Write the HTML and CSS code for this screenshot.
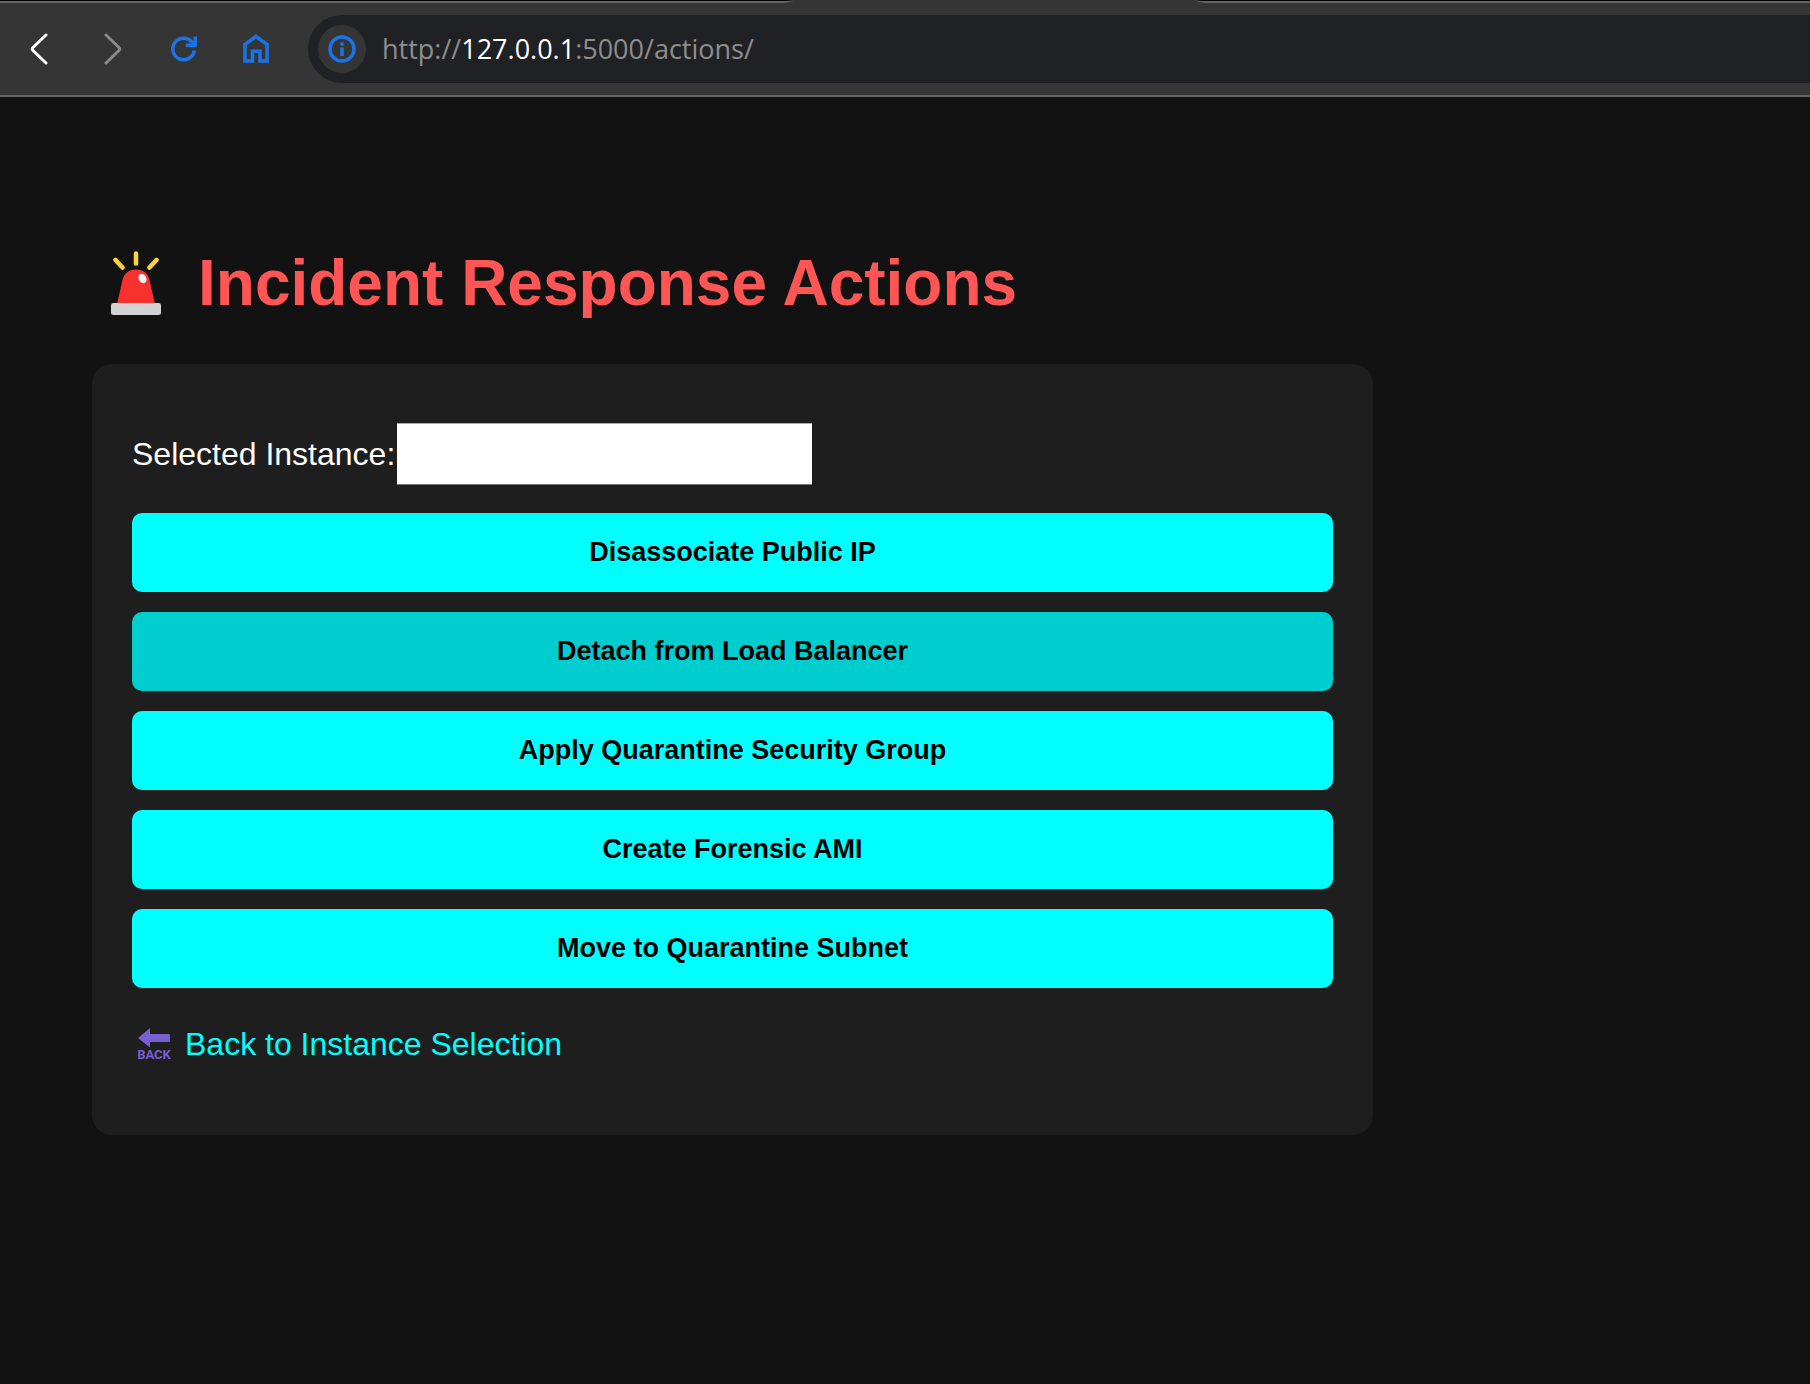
FILE: index.html
```html
<!DOCTYPE html>
<html lang="en">
<head>
<meta charset="utf-8">
<title>Incident Response Actions</title>
<link rel="stylesheet" href="styles.css">
</head>
<body>
<header class="browser">
  <div class="tab-strip">
    <div class="tab-edge tab-edge-left"></div>
    <div class="tab-active"></div>
    <div class="tab-edge tab-edge-right"></div>
  </div>
  <div class="toolbar">
    <nav class="nav-buttons" aria-label="Browser navigation">
      <button class="icon-button" type="button" aria-label="Back">
        <svg width="32" height="32" viewBox="0 0 32 32" fill="none" stroke="#fff" stroke-width="3" stroke-linecap="round" stroke-linejoin="round"><path d="M22 2 9 14.500Q7.500 16 9 17.500L22 30"/></svg>
      </button>
      <button class="icon-button" type="button" aria-label="Forward">
        <svg width="32" height="32" viewBox="0 0 32 32" fill="none" stroke="#8a8a8a" stroke-width="3" stroke-linecap="round" stroke-linejoin="round"><path d="M10 2 23 14.500Q24.500 16 23 17.500L10 30"/></svg>
      </button>
      <button class="icon-button" type="button" aria-label="Reload">
        <svg width="32" height="32" viewBox="0 0 32 32" fill="none" stroke="#1a73e8" stroke-width="3.500"><path d="M26.300 17.500A10.800 10.800 0 1 1 24 9.200L26 12"/><path d="M27.200 3.500V12.300H17.800"/></svg>
      </button>
      <button class="icon-button" type="button" aria-label="Home">
        <svg width="32" height="32" viewBox="0 0 32 32" fill="none" stroke="#1a73e8" stroke-width="3.500"><path d="M5 28V11.500L16 3.500 27 11.500V28H20V18.200H12.500V28Z"/></svg>
      </button>
    </nav>
    <div class="address">
      <button class="site-info" type="button" aria-label="Site information">
        <svg width="28" height="28" viewBox="0 0 28 28" fill="none" stroke="#1a73e8" stroke-width="3.500"><circle cx="14" cy="14" r="12"/><path d="M14 12.500V21M14 7.500V10.500"/></svg>
      </button>
      <span class="url">http://<span class="host">127.0.0.1</span>:5000/actions/</span>
    </div>
  </div>
</header>
<main class="page">
  <h1 class="title">
    <svg class="siren" width="52" height="64" viewBox="0 0 52 64" aria-hidden="true">
      <path d="M26 2.500V12.500M5.500 9 12.500 16.500M46.500 9 39.500 16.500" stroke="#ffd13b" stroke-width="4.500" stroke-linecap="round"/>
      <path d="M7 53 12.500 29C14 22.500 19 18.500 26 18.500S38 22.500 39.500 29L45 53Z" fill="#f8312f"/>
      <ellipse cx="32.500" cy="27.500" rx="3.800" ry="5" fill="#f4f4f4" transform="rotate(-25 32.500 27.500)"/>
      <rect x="1" y="52" width="50" height="12" rx="2.500" fill="#d3d3d3"/>
    </svg>
    Incident Response Actions
  </h1>
  <section class="card">
    <div class="instance">
      <label for="instance">Selected Instance:</label>
      <input class="instance-value" id="instance" type="text" readonly>
    </div>
    <form class="actions">
      <button class="action" type="button">Disassociate Public IP</button>
      <button class="action action-hover" type="button">Detach from Load Balancer</button>
      <button class="action" type="button">Apply Quarantine Security Group</button>
      <button class="action" type="button">Create Forensic AMI</button>
      <button class="action" type="button">Move to Quarantine Subnet</button>
    </form>
    <a class="back-link" href="#">
      <svg width="34" height="34" viewBox="0 0 34 34" fill="#7a5fd0" aria-hidden="true">
        <path d="M0 10 12 0V6H31Q32 6 32 7V13Q32 14 31 14H12V19.500Z"/>
        <text class="back-label" x="16" y="31" text-anchor="middle">BACK</text>
      </svg>
      Back to Instance Selection
    </a>
  </section>
</main>
</body>
</html>
```
FILE: styles.css
```css
* {
  box-sizing: border-box;
}

body {
  margin: 0;
  min-height: 100vh;
  background: #121212;
  color: #fff;
  font-family: Arial, "Liberation Sans", sans-serif;
  font-size: 32px;
}

.browser {
  background: #353535;
  border-bottom: 2px solid #666;
}

.tab-strip {
  display: grid;
  grid-template-columns: 793px 403px 1fr;
  height: 3px;
}

.tab-edge {
  background: #000;
  border-bottom: 2px solid #666;
}

.tab-edge-left {
  border-bottom-right-radius: 12px 3px;
}

.tab-edge-right {
  border-bottom-left-radius: 12px 3px;
}

.toolbar {
  display: flex;
  align-items: center;
  gap: 36px;
  padding: 12px 0 12px 24px;
}

.nav-buttons {
  display: flex;
  gap: 40px;
}

.icon-button,
.site-info {
  display: flex;
  align-items: center;
  justify-content: center;
  padding: 0;
  border: 0;
  background: none;
}

.address {
  display: flex;
  flex: 1;
  align-items: center;
  gap: 16px;
  height: 68px;
  padding-left: 10px;
  border-radius: 34px 0 0 34px;
  background: #202124;
}

.site-info {
  width: 48px;
  height: 48px;
  border-radius: 50%;
  background: #353535;
}

.url {
  color: #8e8e8e;
  font-family: "Segoe UI", "Open Sans", sans-serif;
  font-size: 27px;
  line-height: 36px;
}

.host {
  color: #fff;
}

.page {
  max-width: 1465px;
  padding: 149px 92px 80px;
}

.title {
  display: flex;
  align-items: center;
  gap: 36px;
  margin: 0 0 44px;
  padding-left: 18px;
  color: #f55;
  font-size: 64px;
  line-height: 74px;
}

.card {
  padding: 59px 40px 72px;
  border-radius: 20px;
  background: #1e1e1e;
}

.instance {
  display: flex;
  align-items: center;
  gap: 2px;
  margin-bottom: 28px;
}

.instance-value {
  width: 415px;
  height: 62px;
  padding: 0 8px;
  border: 0;
  border-top: 1px solid #aaa;
  border-bottom: 1px solid #777;
  background: #fff;
  color: #000;
  font: inherit;
}

.actions {
  display: flex;
  flex-direction: column;
  gap: 20px;
  margin-bottom: 38px;
}

.action {
  height: 79px;
  border: 0;
  border-radius: 10px;
  background: #0ff;
  color: #000;
  font: bold 27px Arial, "Liberation Sans", sans-serif;
  cursor: pointer;
}

.action:hover,
.action-hover {
  background: #00cdcd;
}

.back-link {
  display: inline-flex;
  align-items: center;
  gap: 13px;
  padding-left: 6px;
  color: #0ff;
  line-height: 37px;
  text-decoration: none;
  vertical-align: top;
}

.back-label {
  font: bold 13px Roboto, sans-serif;
}
```
